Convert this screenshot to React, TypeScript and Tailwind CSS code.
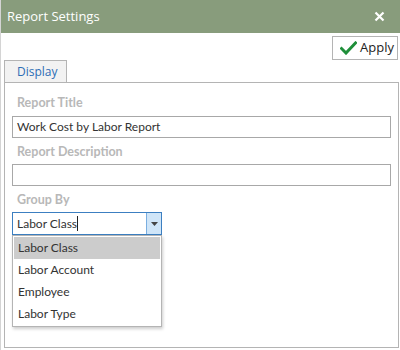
import React from 'react';

const font = { fontFamily: '"Open Sans", "Noto Sans", sans-serif' };
const bodyFont = { fontFamily: 'Lato, "Open Sans", sans-serif' };

const CheckIcon = () => (
  <svg width="17" height="14" viewBox="0 0 17 14">
    <path d="M1.5 7.5 L6 12 L15.5 2" fill="none" stroke="#1f8f3a" strokeWidth="3" strokeLinecap="square" />
  </svg>
);

const CloseIcon = () => (
  <svg width="11" height="11" viewBox="0 0 11 11">
    <path d="M1.5 1.5 L9.5 9.5 M9.5 1.5 L1.5 9.5" stroke="#fff" strokeWidth="2.2" />
  </svg>
);

const options = ['Labor Class', 'Labor Account', 'Employee', 'Labor Type'];

export default function App() {
  return (
    <div className="w-[400px] h-[350px] bg-white border-l border-[#d4d4d4] flex flex-col overflow-hidden" style={font}>
      {/* title bar */}
      <div className="h-[33px] shrink-0 bg-[#889c7c] flex items-center justify-between pl-[6px] pr-[15px]">
        <span className="text-white text-[13px]">Report Settings</span>
        <CloseIcon />
      </div>

      {/* toolbar */}
      <div className="flex justify-end pt-[3px] pr-[2px]">
        <button className="h-[24px] w-[66px] border border-[#b4b4b4] bg-white flex items-center gap-[3px] pl-[7px] text-[13px] text-[#222]">
          <CheckIcon />
          Apply
        </button>
      </div>

      {/* tabs */}
      <div className="flex pl-[3px]">
        <div className="h-[22px] w-[63px] border border-b-0 border-[#b4b4b4] bg-[#f2f2f2] flex items-center pl-[12px] text-[12px] text-[#2d6db5]">
          Display
        </div>
      </div>

      <div className="ml-[3px] mr-[1px] flex-1 mb-[2px] border border-[#b4b4b4] px-[7px] pt-[11px] flex flex-col" style={bodyFont}>
        <label className="pl-[5px] text-[12.5px] font-bold text-[#b8b8b8] leading-[18px]">Report Title</label>
        <div className="mt-[4px] h-[22px] border border-[#a8a8a8] flex items-center pl-[4px] text-[12px] text-[#333]">
          Work Cost by Labor Report
        </div>
        <label className="pl-[5px] mt-[5px] text-[12.5px] font-bold text-[#b8b8b8] leading-[18px]">Report Description</label>
        <div className="mt-[3px] h-[22px] border border-[#a8a8a8]" />
        <label className="pl-[5px] mt-[5px] text-[12.5px] font-bold text-[#b8b8b8] leading-[18px]">Group By</label>

        <div className="relative mt-[3px] w-[150px]">
          <div className="h-[23px] border border-[#3c7fc1] flex items-center text-[12px] text-[#333]">
            <div className="flex-1 pl-[4px] flex items-center">
              Labor Class<span className="inline-block w-px h-[15px] bg-[#222]" />
            </div>
            <div className="w-[15px] h-full bg-[#cfe5f8] border-l border-[#7aaee0] flex items-center justify-center">
              <svg width="7" height="4" viewBox="0 0 7 4">
                <path d="M0 0 H7 L3.5 4 Z" fill="#444" />
              </svg>
            </div>
          </div>
          <div className="absolute left-0 top-[23px] w-[150px] bg-white border border-[#b4b4b4] shadow-[1px_2px_3px_rgba(0,0,0,0.2)] py-[1px] px-[1px]">
            {options.map((o, i) => (
              <div
                key={o}
                className={`h-[22px] flex items-center pl-[4px] text-[12px] text-[#333] ${i === 0 ? 'bg-[#cccccc]' : ''}`}
              >
                {o}
              </div>
            ))}
          </div>
        </div>
      </div>
    </div>
  );
}
